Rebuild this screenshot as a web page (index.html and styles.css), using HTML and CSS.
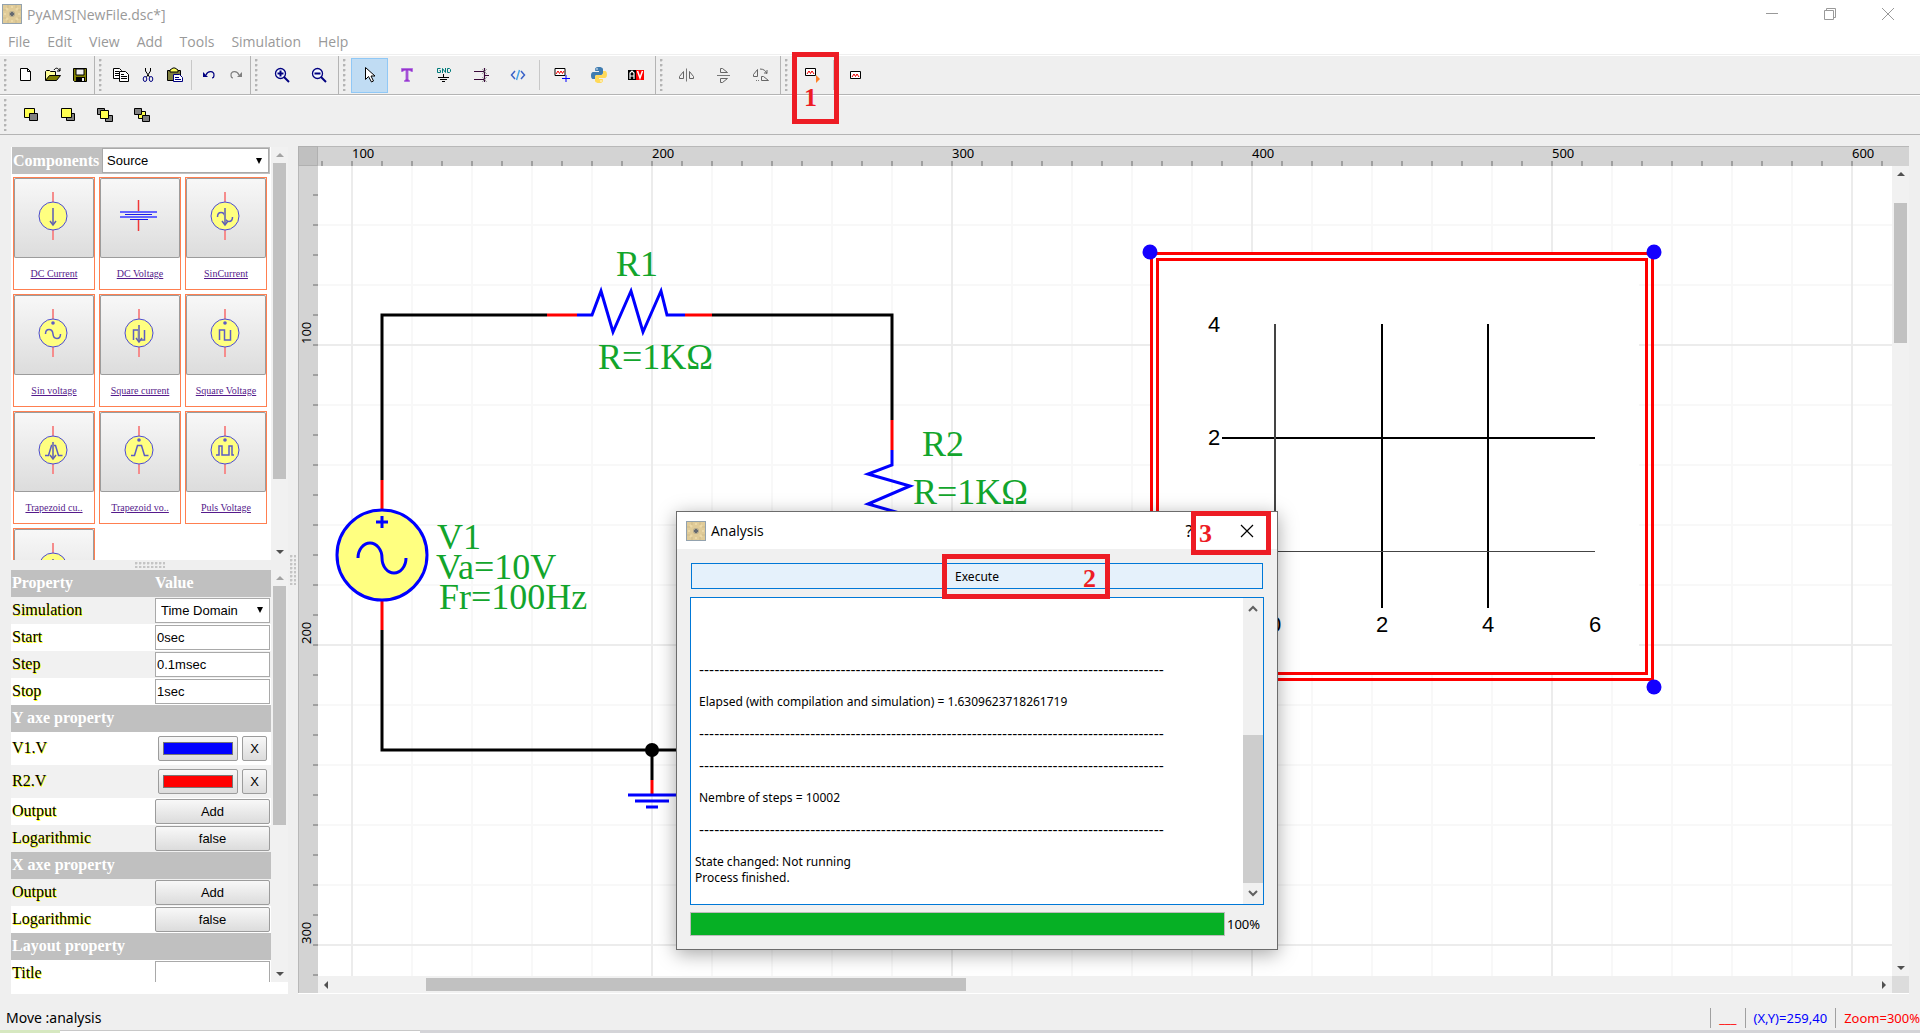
FILE: index.html
```html
<!DOCTYPE html>
<html lang="en">
<head>
<meta charset="utf-8">
<title>PyAMS[NewFile.dsc*]</title>
<link rel="stylesheet" href="styles.css">
</head>
<body>
<svg class="defs" aria-hidden="true">
  <defs>
    <symbol id="app-icon" viewBox="0 0 20 20">
      <rect x=".5" y=".5" width="19" height="19" fill="#e0cb98" stroke="#93a2ae"/>
      <path d="M4 4l2 2M16 4l-2 2M4 16l2-2M16 16l-2-2M10 2v2M10 16v2M2 10h2M16 10h2" stroke="#ecd9a8" stroke-width="2"/>
      <path d="M1 6h3M16 6h3M1 14h3M16 14h3M6 1v3M14 1v3M6 16v3M14 16v3" stroke="#cfbb8a" stroke-width="1"/>
      <circle cx="10" cy="10" r="3" fill="#b3a98c"/>
      <path d="M10 8v4M8 10h4" stroke="#666a70" stroke-width="2"/>
    </symbol>
    <symbol id="pins" viewBox="0 0 80 80">
      <path d="M39 14v10M39 52v10" stroke="#f58c8c" stroke-width="2"/>
      <circle cx="39" cy="38" r="14" fill="#ffff80" stroke="#4a4ad8"/>
    </symbol>
    <symbol id="source-arrow" viewBox="0 0 80 80">
      <path d="M39 30v17" stroke="#8484a8" stroke-width="2"/>
      <path d="M36 43l3 4 3-4" fill="none" stroke="#6060b0" stroke-width="1.500"/>
    </symbol>
    <symbol id="wave" viewBox="0 0 80 80">
      <path d="M31.500 39c0-6 7-6 7.500 0s7.500 6 7.500 0" fill="none" stroke="#5c5cc4" stroke-width="1.500"/>
    </symbol>
    <symbol id="square" viewBox="0 0 80 80">
      <path d="M33.500 45v-10h5v10h6v-10" fill="none" stroke="#5c5cc4" stroke-width="1.500"/>
    </symbol>
    <symbol id="trapezoid" viewBox="0 0 80 80">
      <path d="M31 43.500h3.500l3-10h4l3 10h4" fill="none" stroke="#5c5cc4" stroke-width="1.500"/>
    </symbol>
    <symbol id="pulse" viewBox="0 0 80 80">
      <path d="M30 43h3v-9h3v9h7v-9h3v9h2" fill="none" stroke="#5c5cc4" stroke-width="1.500"/>
    </symbol>
    <symbol id="plus-dot" viewBox="0 0 80 80">
      <circle cx="39" cy="28" r="1.800" fill="#5c5cc4"/>
    </symbol>
    <symbol id="tri-up" viewBox="0 0 8 4"><path d="M4 0l4 4H0z" fill="currentColor"/></symbol>
    <symbol id="tri-down" viewBox="0 0 8 4"><path d="M4 4l4-4H0z" fill="currentColor"/></symbol>
    <symbol id="tri-left" viewBox="0 0 4 8"><path d="M0 4l4-4v8z" fill="currentColor"/></symbol>
    <symbol id="tri-right" viewBox="0 0 4 8"><path d="M4 4L0 0v8z" fill="currentColor"/></symbol>
  </defs>
</svg>

<header class="titlebar">
  <svg class="app-icon" width="20" height="20"><use href="#app-icon"/></svg>
  <h1 class="window-title">PyAMS[NewFile.dsc*]</h1>
  <div class="window-buttons">
    <button aria-label="Minimize"><svg width="14" height="14"><path d="M1 6.500h12" stroke="#999"/></svg></button>
    <button aria-label="Restore"><svg width="14" height="14"><path d="M1.500 3.500h9v9h-9zM3.500 3.500v-2h9v9h-2" fill="none" stroke="#999"/></svg></button>
    <button aria-label="Close"><svg width="14" height="14"><path d="M1 1l12 12M13 1L1 13" stroke="#999"/></svg></button>
  </div>
</header>

<nav class="menubar">
  <a href="#">File</a><a href="#">Edit</a><a href="#">View</a><a href="#">Add</a><a href="#">Tools</a><a href="#">Simulation</a><a href="#">Help</a>
</nav>

<div class="toolbar">
  <div class="group">
    <span class="handle"></span>
    <button class="small" aria-label="New"><svg width="16" height="16"><path d="M2.500 1.500h7l3 3v9h-10z" fill="#fff" stroke="#000"/><path d="M9.500 1.500v3h3" fill="none" stroke="#000"/></svg></button>
    <button class="small" aria-label="Open"><svg width="18" height="16"><path d="M10 3c2-3 4-2 6 1M16 1v3h-3" fill="none" stroke="#000"/><path d="M1.500 13V4.500l1-1h3l1 1h5v4" fill="#ffff9a" stroke="#000"/><path d="M1.500 13.500l4-5h11l-4 5z" fill="#808000" stroke="#000"/></svg></button>
    <button class="small" aria-label="Save"><svg width="16" height="16"><path d="M1.500 1.500h13v13h-12l-1-1z" fill="#808000" stroke="#000"/><path d="M4 2h8v6H4z" fill="#efefef" stroke="#000"/><path d="M4 10h9v5H4z"/><path d="M10 11h2v3h-2z" fill="#efefef"/></svg></button>
  </div>
  <div class="group">
    <span class="handle"></span>
    <button class="small" aria-label="Copy"><svg width="16" height="16"><path d="M.500 1.500h6l2 2v8h-8z" fill="#fff" stroke="#000"/><path d="M2 4.500h4M2 6.500h4M2 8.500h4" stroke="#000"/><path d="M6.500 4.500h6l3 3v7h-9z" fill="#fff" stroke="#000"/><path d="M8 7.500h3M8 9.500h6M8 11.500h6" stroke="#000"/></svg></button>
    <button class="small" aria-label="Cut"><svg width="16" height="16"><path d="M5.500 1v3l4 6M10.500 1v3l-4 6" fill="none" stroke="#000"/><ellipse cx="5" cy="12" rx="1.800" ry="2.500" fill="none" stroke="#000080"/><ellipse cx="11" cy="12" rx="1.800" ry="2.500" fill="none" stroke="#000080"/></svg></button>
    <button class="small" aria-label="Paste"><svg width="18" height="16"><path d="M1.500 3.500h13v10h-13z" fill="#808040" stroke="#000"/><path d="M4 5V3l3-2h2l3 2v2z" fill="#ffff60" stroke="#000"/><path d="M7.500 7.500h6l3 3v4h-9z" fill="#fff" stroke="#000080"/><path d="M9 10.500h4M9 12.500h6" stroke="#000080"/></svg></button>
    <span class="separator"></span>
    <button class="small" aria-label="Undo"><svg width="14" height="14"><path d="M4 7c2-5 8-4 8 0 0 2-1 3-2 3" fill="none" stroke="#000080" stroke-width="1.200"/><path d="M1 4v5h5z" fill="#000080"/></svg></button>
    <button class="small" aria-label="Redo"><svg width="14" height="14"><path d="M10 7C8 2 2 3 2 7c0 2 1 3 2 3" fill="none" stroke="#808080" stroke-width="1.200"/><path d="M13 4v5H8z" fill="#808080"/></svg></button>
  </div>
  <div class="group">
    <span class="handle"></span>
    <button aria-label="Zoom in"><svg width="16" height="16"><circle cx="6.500" cy="6.500" r="5" fill="#f4f8ff" stroke="#000080" stroke-width="1.300"/><path d="M3.500 6.500h6M6.500 3.500v6" stroke="#000080" stroke-width="2"/><path d="M10 10l5 5" stroke="#000080" stroke-width="2"/></svg></button>
    <button aria-label="Zoom out"><svg width="16" height="16"><circle cx="6.500" cy="6.500" r="5" fill="#f4f8ff" stroke="#000080" stroke-width="1.300"/><path d="M3.500 6.500h6" stroke="#000080" stroke-width="2"/><path d="M10 10l5 5" stroke="#000080" stroke-width="2"/></svg></button>
  </div>
  <div class="group">
    <span class="handle"></span>
    <button class="active" aria-label="Select"><svg width="12" height="18"><path d="M1.500 1.500v12l3-3 3 5.500 2-1-2.500-5H11z" fill="#fff" stroke="#000"/></svg></button>
    <button aria-label="Text"><svg width="14" height="16"><path d="M1.500 1.500h11v3h-1.500l-1-1h-2v9l1.500 1v1h-5v-1l1.500-1v-9h-2l-1 1h-1.500z" fill="#9932cc" stroke="#b070e0"/></svg></button>
    <button aria-label="Ground"><svg width="16" height="16"><path d="M4.500 1.500h-3v4h3v-2h-1M6.500 6V1.500l3 4V1M11.500 1.500h2l1 1v2l-1 1h-2z" fill="none" stroke="#007a7a"/><path d="M7.500 7v3M2 10.500h11M4 12.500h7M6 14.500h3" stroke="#000"/></svg></button>
    <button aria-label="Junction"><svg width="16" height="16"><path d="M1 4.500h10M1 12.500h10M11.500 1v14M12 8.500h4" stroke="#380838" stroke-width="1.200"/><path d="M9 2l5 5M14 2L9 7M9 10l5 5M14 10l-5 5" stroke="#777" stroke-width=".600"/></svg></button>
    <button aria-label="Code"><svg width="16" height="16"><path d="M5 4L1.500 8 5 12M11 4l3.500 4L11 12" fill="none" stroke="#3a62c8" stroke-width="1.500"/><path d="M9.500 3l-3 10" stroke="#46a4e8" stroke-width="1.500"/></svg></button>
    <span class="separator"></span>
    <button aria-label="Add analysis"><svg width="18" height="16"><path d="M2 1.500h10v7H2z" fill="#fff" stroke="#000"/><path d="M3 7l2-3 1.500 2.500L8 4l1.500 2.500L11 4" fill="none" stroke="#e00"/><path d="M9 11.500h8M13 8v7" stroke="#00f"/></svg></button>
    <button aria-label="Python"><svg width="18" height="18" viewBox="0 0 18 18"><path d="M9 1c-4 0-3.800 1.800-3.800 2v2H9v1H3.500S1 5.700 1 9.500 3.200 13 3.200 13H5v-2s0-2 2-2h4s2 0 2-2V3.500S13.300 1 9 1z" fill="#3f7cb0"/><path d="M9 17c4 0 3.800-1.800 3.800-2v-2H9v-1h5.500s2.500.3 2.500-3.500S14.800 5 14.800 5H13v2s0 2-2 2H7s-2 0-2 2v3.500S4.700 17 9 17z" fill="#ffd958"/><circle cx="7" cy="3" r=".8" fill="#fff"/><circle cx="11" cy="15" r=".8" fill="#fff"/></svg></button>
    <button aria-label="Values"><svg width="16" height="10"><path d="M0 0h8v10H0z"/><path d="M8 0h8v10H8z" fill="#f00"/><path d="M2 9V3l2-2 2 2v6M2 6h4" fill="none" stroke="#fff" stroke-width="1.200"/><path d="M9.500 1l2.500 7 2.500-7" fill="none" stroke="#fff" stroke-width="1.500"/></svg></button>
  </div>
  <div class="group">
    <span class="handle"></span>
    <button aria-label="Flip horizontal"><svg width="16" height="16"><path d="M7.500 1.500v13" stroke="#777"/><path d="M4.500 4.500v7h-4v-2zM10.500 4.500v7h4v-2z" fill="none" stroke="#666"/></svg></button>
    <button aria-label="Flip vertical"><svg width="16" height="16"><path d="M1 8.500h13" stroke="#777"/><path d="M4.500 5.500h7l-5-4h-2zM4.500 11.500h7l-5 4h-2z" fill="none" stroke="#666"/></svg></button>
    <button aria-label="Rotate"><svg width="18" height="16"><path d="M5.500 2.500v7h-4v-2zM9.500 9.500v4h7l-5-4zM8 2c4 0 6 2 7 5M12 6h3V3" fill="none" stroke="#666"/><path d="M4 13.500h4" stroke="#777" stroke-dasharray="1 1"/></svg></button>
  </div>
  <div class="group last">
    <span class="handle"></span>
    <button aria-label="Run analysis"><svg width="18" height="18"><path d="M2.500 2.500h10v7h-10z" fill="#fff" stroke="#000"/><path d="M4 8l2-3 1.500 2.500L9 5l2 3" fill="none" stroke="#e00"/><path d="M13 9l4 4-4 4z" fill="#ff7f27"/></svg></button>
    <span class="separator"></span>
    <button aria-label="Analysis window"><svg width="12" height="9"><path d="M.500 .500h10v7h-10z" fill="#fff" stroke="#000"/><path d="M2 6l2-3 1.500 2.500L7 3l2 3" fill="none" stroke="#e00"/></svg></button>
    <span class="callout callout-1">1</span>
  </div>
</div>
<div class="toolbar">
  <div class="group last">
    <span class="handle"></span>
    <button aria-label="Bring to front"><svg width="16" height="16"><path d="M1.500 1.500h10v9h-10z" fill="#ffff50" stroke="#000"/><path d="M6.500 6.500h8v7h-8z" fill="#808080" stroke="#000"/></svg></button>
    <button aria-label="Send to back"><svg width="16" height="16"><path d="M6.500 6.500h8v7h-8z" fill="#808080" stroke="#000"/><path d="M1.500 1.500h10v9h-10z" fill="#ffff50" stroke="#000"/></svg></button>
    <button aria-label="Bring forward"><svg width="16" height="16"><path d="M.500 1.500h7v6h-7zM8.500 8.500h7v6h-7z" fill="#808080" stroke="#000"/><path d="M3.500 3.500h8v8h-8z" fill="#ffff50" stroke="#000"/></svg></button>
    <button aria-label="Send backward"><svg width="16" height="16"><path d="M4.500 4.500h7v7h-7z" fill="#ffff50" stroke="#000"/><path d="M.500 1.500h7v6h-7zM8.500 8.500h7v6h-7z" fill="#808080" stroke="#000"/></svg></button>
  </div>
</div>

<main class="main">
  <aside class="sidebar">
    <section class="panel">
      <div class="panel-body">
        <div class="components-head">
          <label for="library">Components</label>
          <select id="library"><option>Source</option></select>
        </div>
        <div class="cards">
          <div class="card"><button aria-label="DC Current"><svg width="80" height="80"><use href="#pins"/><use href="#source-arrow"/></svg></button><a href="#">DC Current</a></div>
          <div class="card"><button aria-label="DC Voltage"><svg width="80" height="80"><path d="M38.500 22v11M38.500 42v11" stroke="#f03838" stroke-width="1.500"/><path d="M20 34h37M20 39h37" stroke="#6464ff" stroke-width="2"/><path d="M25 36.500h27M30 41.500h18" stroke="#1818e8"/></svg></button><a href="#">DC Voltage</a></div>
          <div class="card"><button aria-label="SinCurrent"><svg width="80" height="80"><use href="#pins"/><use href="#wave"/><use href="#source-arrow"/></svg></button><a href="#">SinCurrent</a></div>
          <div class="card"><button aria-label="Sin voltage"><svg width="80" height="80"><use href="#pins"/><use href="#plus-dot"/><use href="#wave"/></svg></button><a href="#">Sin voltage</a></div>
          <div class="card"><button aria-label="Square current"><svg width="80" height="80"><use href="#pins"/><use href="#square"/><use href="#source-arrow"/></svg></button><a href="#">Square current</a></div>
          <div class="card"><button aria-label="Square Voltage"><svg width="80" height="80"><use href="#pins"/><use href="#plus-dot"/><use href="#square"/></svg></button><a href="#">Square Voltage</a></div>
          <div class="card"><button aria-label="Trapezoid current"><svg width="80" height="80"><use href="#pins"/><use href="#trapezoid"/><use href="#source-arrow"/></svg></button><a href="#">Trapezoid cu..</a></div>
          <div class="card"><button aria-label="Trapezoid voltage"><svg width="80" height="80"><use href="#pins"/><use href="#plus-dot"/><use href="#trapezoid"/></svg></button><a href="#">Trapezoid vo..</a></div>
          <div class="card"><button aria-label="Puls Voltage"><svg width="80" height="80"><use href="#pins"/><use href="#plus-dot"/><use href="#pulse"/></svg></button><a href="#">Puls Voltage</a></div>
          <div class="card"><button aria-label="Pulse current"><svg width="80" height="80"><use href="#pins"/><use href="#pulse"/><use href="#source-arrow"/></svg></button></div>
        </div>
      </div>
      <div class="vbar"><svg class="dim" width="8" height="4"><use href="#tri-up"/></svg><div class="track"><div class="thumb components-thumb"></div></div><svg width="8" height="4"><use href="#tri-down"/></svg></div>
    </section>
    <div class="split"><span class="split-dots"></span></div>
    <section class="panel">
      <div class="panel-body">
        <table class="props">
          <tr class="head"><th scope="col">Property</th><th scope="col">Value</th></tr>
          <tr><td><label for="sim">Simulation</label></td><td><select id="sim" class="field"><option>Time Domain</option></select></td></tr>
          <tr><td><label for="start">Start</label></td><td><input id="start" class="field" type="text" value="0sec"></td></tr>
          <tr><td><label for="step">Step</label></td><td><input id="step" class="field" type="text" value="0.1msec"></td></tr>
          <tr><td><label for="stop">Stop</label></td><td><input id="stop" class="field" type="text" value="1sec"></td></tr>
          <tr class="head"><th colspan="2">Y axe property</th></tr>
          <tr class="tall"><td><label for="v1">V1.V</label></td><td><div class="trace"><input id="v1" type="color" value="#0000ff"><button class="push remove">X</button></div></td></tr>
          <tr class="tall"><td><label for="r2">R2.V</label></td><td><div class="trace"><input id="r2" type="color" value="#ff0000"><button class="push remove">X</button></div></td></tr>
          <tr><td><label for="yout">Output</label></td><td><button id="yout" class="push field">Add</button></td></tr>
          <tr><td><label for="ylog">Logarithmic</label></td><td><button id="ylog" class="push field">false</button></td></tr>
          <tr class="head"><th colspan="2">X axe property</th></tr>
          <tr><td><label for="xout">Output</label></td><td><button id="xout" class="push field">Add</button></td></tr>
          <tr><td><label for="xlog">Logarithmic</label></td><td><button id="xlog" class="push field">false</button></td></tr>
          <tr class="head"><th colspan="2">Layout property</th></tr>
          <tr><td><label for="title">Title</label></td><td><input id="title" class="field" type="text"></td></tr>
        </table>
      </div>
      <div class="vbar"><svg class="dim" width="8" height="4"><use href="#tri-up"/></svg><div class="track"><div class="thumb props-thumb"></div></div><svg width="8" height="4"><use href="#tri-down"/></svg></div>
    </section>
  </aside>
  <div class="side-split"><span class="split-dots vertical"></span></div>

  <section class="workspace">
    <div class="corner"></div>
    <svg class="ruler ruler-h" width="100%" height="20">
      <defs><pattern id="ticks-h" x="3" width="30" height="20" patternUnits="userSpaceOnUse"><path d="M1 14v6" stroke="#a0a0a0" stroke-width="2"/></pattern></defs>
      <rect width="100%" height="20" fill="url(#ticks-h)"/>
      <g class="ruler-text"><text x="34" y="11">100</text><text x="334" y="11">200</text><text x="634" y="11">300</text><text x="934" y="11">400</text><text x="1234" y="11">500</text><text x="1534" y="11">600</text></g>
    </svg>
    <svg class="ruler ruler-v" width="20" height="100%">
      <defs><pattern id="ticks-v" y="28" width="20" height="30" patternUnits="userSpaceOnUse"><path d="M14 1h6" stroke="#a0a0a0" stroke-width="2"/></pattern></defs>
      <rect width="20" height="100%" fill="url(#ticks-v)"/>
      <g class="ruler-text"><text transform="translate(12 178) rotate(-90)">100</text><text transform="translate(12 478) rotate(-90)">200</text><text transform="translate(12 778) rotate(-90)">300</text></g>
    </svg>
    <div class="canvas">
      <svg width="100%" height="100%">
        <defs>
          <pattern id="minor" x="33" y="58" width="60" height="60" patternUnits="userSpaceOnUse"><path d="M1 0v60M0 1h60" stroke="#f8f8f8" stroke-width="2"/></pattern>
          <pattern id="major" x="33" y="178" width="300" height="300" patternUnits="userSpaceOnUse"><path d="M1 0v300M0 1h300" stroke="#ececec" stroke-width="2"/></pattern>
        </defs>
        <rect width="100%" height="100%" fill="url(#minor)"/>
        <rect width="100%" height="100%" fill="url(#major)"/>
        <g transform="translate(-318 -166)">
          <g class="wire">
            <path d="M547 315H382V480M712 315H892V420M382 630V750H892V600M652 750V780"/>
            <path class="pin" d="M547 315H577M685 315H712M892 420V450M382 480V510M382 600V630M652 780V795M892 570V600"/>
            <path class="part" d="M577 315H592L601 291L613 332L631 291L643 332L661 291L667 315H685M892 450V465L868 474L910 486L868 504L910 516L868 534L892 541V570M628 795H676M635 801H669M646 807H658"/>
            <circle class="source" cx="382" cy="555" r="45"/>
            <path class="part" d="M376 522H388M382 516V528M358 558A12 15 0 0 1 382 558A12 15 0 0 0 406 558"/>
          </g>
          <circle cx="652" cy="750" r="7"/>
          <g class="net-text">
            <text x="616" y="276">R1</text><text x="598" y="369">R=1KΩ</text>
            <text x="922" y="456">R2</text><text x="913" y="504">R=1KΩ</text>
            <text x="437" y="549">V1</text><text x="436" y="579">Va=10V</text><text x="439" y="609">Fr=100Hz</text>
          </g>
          <rect x="1152" y="254" width="487" height="420" fill="#fff"/>
          <path d="M1151.500 253.500H1652.500V679.500H1151.500ZM1157.500 259.500H1646.500V673.500H1157.500Z" fill="none" stroke="#f00" stroke-width="3"/>
          <path d="M1382 324V608M1488 324V608M1222 438H1595" stroke="#000" stroke-width="2"/>
          <path d="M1275 324V608" stroke="#444" stroke-width="2"/>
          <path d="M1222 551.500H1595" stroke="#444"/>
          <g class="plot-text">
            <text x="1214" y="332">4</text><text x="1214" y="445">2</text>
            <text x="1275" y="632">0</text><text x="1382" y="632">2</text><text x="1488" y="632">4</text><text x="1595" y="632">6</text>
          </g>
          <g fill="#1400ff"><circle cx="1150" cy="252" r="7.500"/><circle cx="1654" cy="252" r="7.500"/><circle cx="1654" cy="687" r="7.500"/></g>
        </g>
      </svg>
    </div>
    <div class="vbar work-vbar"><svg width="8" height="4"><use href="#tri-up"/></svg><div class="track"><div class="thumb work-vthumb"></div></div><svg width="8" height="4"><use href="#tri-down"/></svg></div>
    <div class="hbar"><svg width="4" height="8"><use href="#tri-left"/></svg><div class="track"><div class="thumb work-hthumb"></div></div><svg width="4" height="8"><use href="#tri-right"/></svg></div>
    <div class="grip"></div>
  </section>
</main>

<footer class="statusbar">
  <span class="hint">Move :analysis</span>
  <span class="cell pen">___</span>
  <span class="cell coords">(X,Y)=259,40</span>
  <span class="cell zoom">Zoom=300%</span>
</footer>
<div class="desktop-edge"><span class="edge-green"></span><span class="edge-white"></span><span class="edge-grey"></span></div>

<section class="dialog" role="dialog" aria-label="Analysis">
  <header class="dialog-title">
    <svg width="20" height="20"><use href="#app-icon"/></svg>
    <h2>Analysis</h2>
    <button class="help" aria-label="Help">?</button>
    <button class="close" aria-label="Close"><svg width="14" height="14"><path d="M1 1l12 12M13 1L1 13" stroke="#000" stroke-width="1.200"/></svg></button>
  </header>
  <div class="dialog-body">
    <button class="execute">Execute</button>
    <div class="log">
      <div class="log-text">
        <p class="dashes">--------------------------------------------------------------------------------------------</p>
        <p class="entry">Elapsed (with compilation and simulation) = 1.6309623718261719</p>
        <p class="dashes">--------------------------------------------------------------------------------------------</p>
        <p class="dashes">--------------------------------------------------------------------------------------------</p>
        <p class="entry">Nembre of steps = 10002</p>
        <p class="dashes">--------------------------------------------------------------------------------------------</p>
        <p>State changed: Not running<br>Process finished.</p>
      </div>
      <div class="log-bar">
        <svg width="10" height="7"><path d="M1 6l4-4 4 4" fill="none" stroke="#606060" stroke-width="2"/></svg>
        <div class="log-thumb"></div>
        <svg width="10" height="7"><path d="M1 1l4 4 4-4" fill="none" stroke="#606060" stroke-width="2"/></svg>
      </div>
    </div>
    <div class="progress-row"><progress value="100" max="100" aria-label="Progress"></progress><span>100%</span></div>
  </div>
  <span class="callout callout-2">2</span>
  <span class="callout callout-3">3</span>
</section>
</body>
</html>
```

FILE: styles.css
```css
* { box-sizing: border-box; }

body {
  position: relative;
  display: flex;
  flex-direction: column;
  height: 100vh;
  min-height: 900px;
  margin: 0;
  overflow: hidden;
  background: #efefef;
  font: 13px "Noto Sans", sans-serif;
  color: #000;
}

button { padding: 0; border: 0; background: none; font: inherit; color: inherit; }
svg { display: block; }
.defs { position: absolute; width: 0; height: 0; }

/* Window frame */
.titlebar { display: flex; align-items: center; flex: none; height: 28px; padding-left: 2px; background: #fff; color: #999; }
.window-title { margin: 0 0 0 5px; font: 14px "Open Sans", sans-serif; }
.window-buttons { display: flex; gap: 44px; margin-left: auto; padding-right: 25px; }
.menubar { display: flex; gap: 17px; flex: none; height: 27px; padding: 3px 8px 0; border-bottom: 1px solid #efefef; background: #fff; font: 14px/22px "Open Sans", sans-serif; }
.menubar a { color: #999; text-decoration: none; }

/* Toolbars */
.toolbar { display: flex; flex: none; height: 40px; border-top: 1px solid #fff; border-bottom: 1px solid #b4b4b4; }
.group { position: relative; display: flex; align-items: center; padding-right: 1px; border-right: 1px solid #b4b4b4; }
.group.last { flex: 1; border-right: 0; }
.handle { width: 4px; height: 32px; margin: 0 4px; background: radial-gradient(circle at 1px 1px, #b4b4b4 1px, transparent 2px) 0 0 / 4px 5px; }
.group button { display: flex; align-items: center; justify-content: center; width: 37px; height: 35px; }
.group button.small { width: 27px; }
.group button.active { border: 1px solid #90c8f6; background: #c0dcf3; }
.separator { width: 1px; height: 30px; margin: 0 3px; background: #c8c8c8; }

/* Sidebar */
.main { display: flex; flex: 1; min-height: 0; padding: 11px 11px 0 11px; }
.sidebar { display: flex; flex-direction: column; flex: none; width: 277px; padding: 1px 0 12px; background: linear-gradient(#efefef, #efefef) top / 100% 50% no-repeat #fff; }
.panel { display: flex; flex: 1 1 0; min-height: 0; background: #fff; }
.panel-body { width: 260px; overflow: hidden; }
.components-head { display: flex; align-items: center; height: 27px; margin: 0 1px; padding: 0 1px; background: #c0c0c0; }
.components-head label { width: 89px; font: bold 16px "Liberation Serif", serif; color: #fff; }
select { appearance: none; height: 25px; border: 1px solid #a9a9a9; border-radius: 0; padding: 0 4px; font: 13px "Liberation Sans", sans-serif; color: #000; background: url("data:image/svg+xml,%3Csvg xmlns='http://www.w3.org/2000/svg' width='6' height='6'%3E%3Cpath d='M0 0h6L3 6z'/%3E%3C/svg%3E") right 6px center no-repeat #fff; }
.components-head select { flex: 1; }
.cards { display: grid; grid-template-columns: repeat(3, 82px); gap: 4px; padding: 3px 2px; }
.card { height: 113px; border: 1px solid #ff7f50; text-align: center; font: 10px/12px "Liberation Serif", serif; }
.card button { display: block; width: 80px; height: 80px; margin-bottom: 10px; border-radius: 2px; background: linear-gradient(#f8f8f8, #dcdcdc); box-shadow: inset 0 0 0 1px #9c9c9c; }
.card a { color: #551a8b; }
.vbar { display: flex; flex-direction: column; align-items: center; width: 17px; padding: 6px 0; background: #f1f1f1; color: #505050; }
.vbar .dim { color: #a3a3a3; }
.track { position: relative; flex: 1; margin: 6px 0; }
.vbar .thumb { width: 13px; background: #c1c1c1; }
.components-thumb { height: 83%; }
.props-thumb { height: 63%; }
.split { display: flex; align-items: center; justify-content: center; flex: none; height: 10px; background: #efefef; }
.split-dots { width: 30px; height: 6px; background: radial-gradient(circle at 1px 1px, #c4c4c4 1px, transparent 2px) 0 0 / 4px 4px; }
.split-dots.vertical { width: 6px; height: 30px; }
.side-split { display: flex; align-items: center; justify-content: center; width: 10px; flex: none; }

.props { width: 260px; border-collapse: collapse; table-layout: fixed; font: 16px/18px "Liberation Serif", serif; }
.props tr { height: 27px; }
.props tr.tall { height: 33px; }
.props tr:nth-child(even) { background: #f1f1f1; }
.props tr.head { background: #c0c0c0; }
.props th, .props td { padding: 0 1px; text-align: left; }
.props th:first-child, .props td:first-child { width: 143px; }
.props th { color: #fff; }
.props label { text-shadow: 1px 1px #ff0; }
.field { display: block; width: 115px; height: 25px; border: 1px solid #a9a9a9; padding: 0 1px; font: 13px "Liberation Sans", sans-serif; }
.props select.field { padding-left: 5px; }
.push { border: 1px solid #9c9c9c; border-radius: 2px; background: linear-gradient(#f8f8f8, #dcdcdc); font: 13px "Liberation Sans", sans-serif; }
.push.field { border-color: #9c9c9c; }
.trace { display: flex; gap: 4px; padding-left: 3px; }
.trace input { appearance: none; width: 80px; height: 25px; padding: 5px 4px; border: 1px solid #9c9c9c; border-radius: 2px; background: linear-gradient(#f8f8f8, #dcdcdc); }
.trace input::-webkit-color-swatch-wrapper { padding: 0; }
.trace input::-webkit-color-swatch { border: 1px solid #777; border-radius: 0; }
.remove { width: 25px; height: 25px; }

/* Work area */
.workspace { display: grid; grid-template: 20px 1fr 17px / 20px 1fr 17px; flex: 1; min-width: 0; border-bottom: 1px solid #fff; }
.corner { border: 1px solid #b0b0b0; background: #c0c0c0; }
.ruler { background: #d3d3d3; }
.ruler-h { grid-column: 2 / 4; border-top: 1px solid #b8b8b8; }
.ruler-v { grid-row: 2 / 4; border-left: 1px solid #b8b8b8; }
.ruler-text { font: 13px "Noto Sans", sans-serif; }
.canvas { min-width: 0; min-height: 0; overflow: hidden; background: #fff; }
.work-vthumb { height: 18%; margin-top: 21px; }
.hbar { display: flex; align-items: center; grid-column: 2; padding: 0 6px; background: #f1f1f1; color: #505050; }
.hbar .track { margin: 0 6px; }
.work-hthumb { width: 35%; height: 13px; margin-left: 92px; background: #c1c1c1; }
.grip { background: #dcdcdc; }

.wire path { fill: none; stroke: #000; stroke-width: 3; }
.wire path.pin { stroke: #f00; }
.wire path.part { stroke: #00f; }
.source { fill: #ffff80; stroke: #00f; stroke-width: 3; }
.net-text { fill: #12a52c; font: 36px "Liberation Serif", serif; }
.plot-text { font: 22px "Liberation Sans", sans-serif; text-anchor: middle; }

/* Status bar */
.statusbar { display: flex; align-items: center; flex: none; height: 36px; padding: 11px 0 0 6px; font-size: 13px; }
.hint { margin-right: auto; font-size: 14px; }
.cell { height: 20px; padding: 0 8px; border-left: 1px solid #a0a0a0; line-height: 20px; }
.pen, .zoom { color: #f00; }
.coords { color: #00f; }
.zoom { padding: 0 0 0 8px; }
.desktop-edge { display: flex; flex: none; height: 3px; }
.edge-green { width: 60px; background: #d6e8c0; }
.edge-white { width: 360px; border-top: 1px solid #c8c8c8; background: #fff; }
.edge-grey { flex: 1; background: #d4d4d8; }

/* Analysis dialog */
.dialog { position: absolute; left: 676px; top: 511px; width: 602px; border: 1px solid #6c6c6c; background: #f0f0f0; box-shadow: 0 4px 18px rgba(0, 0, 0, .35); }
.dialog-title { display: flex; align-items: center; height: 37px; padding: 0 23px 0 9px; background: #fff; }
.dialog-title h2 { flex: 1; margin: 0 0 0 5px; font: 14px "Open Sans", sans-serif; }
.help { width: 14px; margin-right: 44px; font-size: 16px; }
.dialog-body { padding: 14px 13px 13px; }
.execute { display: block; width: calc(100% - 2px); height: 26px; margin: 0 1px 8px; border: 1px solid #0078d7; background: #e5f1fb; font-size: 12px; }
.log { display: flex; height: 308px; border: 1px solid #0078d7; background: #fff; font-size: 12px; line-height: 16px; }
.log-text { flex: 1; padding: 64px 4px 0; }
.log-text p { margin: 0 0 16px; }
.log-text .entry, .log-text .dashes { padding-left: 4px; }
.log-text .dashes { font-family: "DejaVu Sans", sans-serif; font-size: 14px; white-space: nowrap; }
.log-bar { display: flex; flex-direction: column; align-items: center; width: 20px; padding: 7px 0; background: #f0f0f0; }
.log-thumb { width: 20px; height: 148px; margin: auto 0 7px; background: #cdcdcd; }
.progress-row { display: flex; align-items: center; gap: 2px; margin-top: 7px; }
progress { appearance: none; flex: 1; height: 24px; border: 1px solid #bcbcbc; background: #e6e6e6; }
progress::-webkit-progress-bar { background: #e6e6e6; }
progress::-webkit-progress-value { background: #06b025; }
.progress-row span { width: 37px; font-size: 13px; line-height: 16px; }

/* Numbered step markers */
.callout { position: absolute; border: 5px solid #ed1c24; font: bold 26px/26px "Liberation Serif", serif; color: #ed1c24; pointer-events: none; }
.callout-1 { left: 11px; top: -4px; z-index: 1; width: 47px; height: 72px; padding: 28px 0 0 7px; }
.callout-2 { left: 265px; top: 42px; width: 168px; height: 45px; padding: 7px 9px 0 0; text-align: right; }
.callout-3 { left: 514px; top: -1px; width: 80px; height: 44px; padding: 5px 0 0 3px; }
```
